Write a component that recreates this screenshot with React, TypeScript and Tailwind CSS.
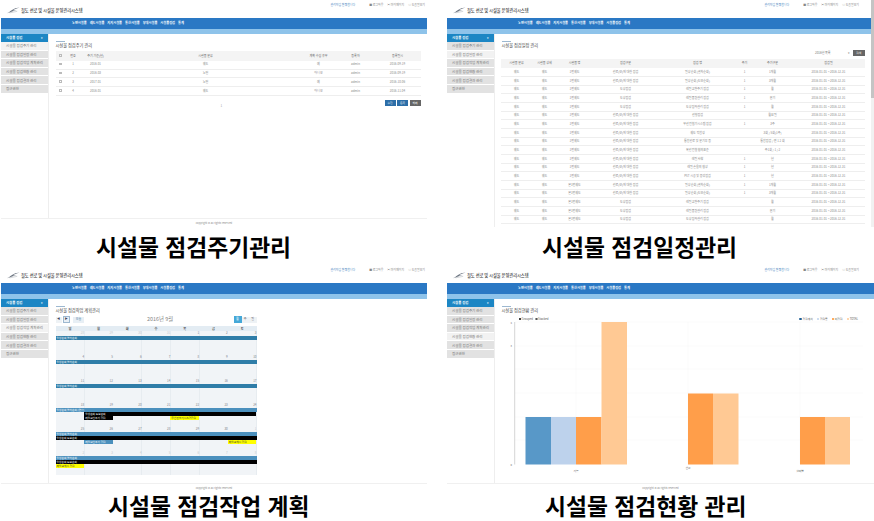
import type { ReactNode } from "react";

const navItems = ["노면시설물", "궤도시설물", "지지시설물", "통신시설물", "부대시설물", "시설물점검", "통계"];
const sideItems = [
  "시설물 점검주기 관리",
  "시설물 점검일정 관리",
  "시설물 점검작업 계획관리",
  "시설물 점검현황 관리",
  "시설물 점검결과 관리",
  "접근권한",
];

function Logo() {
  return (
    <svg viewBox="0 0 14 7" className="w-[13px] h-[7px] shrink-0">
      <path d="M0 6.5 C3 5 5 2.5 9 1 L13.5 .4 C10 1.6 8 2.2 6.5 3.4 L10.5 3 C7 4 4 5.4 0 6.5Z" fill="#6b7480" />
      <path d="M3 6 L11 4.4" stroke="#a3a9b0" strokeWidth=".5" />
    </svg>
  );
}

function Panel(props: {
  active: number;
  title: string;
  caption: string;
  captionClass: string;
  rightPad: string;
  bodyClass: string;
  footer?: boolean;
  children: ReactNode;
}) {
  return (
    <div className="flex flex-col">
      <div className={`flex justify-between h-[18px] pl-[6px] ${props.rightPad}`}>
        <div className="flex items-center gap-[1px] pt-[2px] text-[4.2px] font-medium text-[#333]">
          <Logo />
          <span>철도 선로 및 시설물 운영관리시스템</span>
        </div>
        <div className="flex gap-[4px] pt-[3px] text-[2.9px] leading-[4px] text-[#888]">
          <span className="mr-[10px] text-[#3f7fc0]">관리자님 환영합니다</span>
          <span>■ 로그아웃</span>
          <span>▣ 마이페이지</span>
          <span>◎ 도움말보기</span>
        </div>
      </div>
      <div className="flex items-center gap-[3px] h-[10.5px] pl-[71px] bg-[#2a78c4] text-[3.2px] font-bold text-white">
        {navItems.map((n) => (
          <span key={n}>{n}</span>
        ))}
      </div>
      <div className="h-[5.5px] bg-[#8ec3ea]" />
      <div className={`flex overflow-hidden ${props.bodyClass}`}>
        <div className="w-[46.5px] shrink-0 border-r border-[#eeeeee] box-content">
          <div className="flex items-center justify-between h-[8px] px-[5px] bg-[#1c86c4] text-[3.4px] font-bold text-white">
            <span>시설물 점검</span>
            <span className="text-[3px]">▾</span>
          </div>
          {sideItems.map((s, i) => (
            <div
              key={s}
              className={`flex items-center h-[8.6px] pl-[5px] border-b border-white text-[3.5px] text-[#777] ${
                i === props.active ? "bg-[#f2f2f2] text-[#4a86b8]" : "bg-[#e2e2e2]"
              }`}
            >
              {s}
            </div>
          ))}
        </div>
        <div className="flex-1 min-w-0 pt-[6.5px]">
          <div className="ml-[7px] w-[9px] h-[.5px] bg-[#9db8d0]" />
          <div className="ml-[7px] mt-[.5px] text-[4.2px] leading-[6px] text-[#444]">{props.title}</div>
          {props.children}
        </div>
      </div>
      {props.footer !== false && (
        <div className="border-t border-[#f0f0f0] h-[10px] pt-[3px] text-center text-[2.6px] leading-[3px] text-[#888]">
          copyright © all rights reserved
        </div>
      )}
      <div
        className={`font-['Liberation_Sans','Noto_Sans_CJK_KR',sans-serif] font-bold text-black whitespace-nowrap ${props.captionClass}`}
      >
        {props.caption}
      </div>
    </div>
  );
}

const cycleRows = [
  ["1", "2016-01", "궤도", "예", "admin", "2016-09-19"],
  ["2", "2016-03", "노면", "아니오", "admin", "2016-09-19"],
  ["3", "2017-01", "노면", "예", "admin", "2016-10-06"],
  ["4", "2016-01", "궤도", "아니오", "admin", "2016-11-04"],
];

function CycleTable() {
  return (
    <div className="ml-[7px] mt-[3.5px] w-[365px]">
      <table className="w-full table-fixed border-collapse text-center text-[3px] text-[#888]">
        <colgroup>
          <col className="w-[10px]" />
          <col className="w-[15px]" />
          <col className="w-[30px]" />
          <col className="w-[190px]" />
          <col className="w-[36px]" />
          <col className="w-[38px]" />
          <col className="w-[46px]" />
        </colgroup>
        <thead>
          <tr className="h-[9.5px] bg-[#f4f4f4] text-[#666]">
            <th className="font-normal">
              <span className="inline-block w-[2.5px] h-[2.5px] border-[.5px] border-[#bbbbbb]" />
            </th>
            <th className="font-normal">번호</th>
            <th className="font-normal">주기 기준(년)</th>
            <th className="font-normal">시설물 분류</th>
            <th className="font-normal">계획 수립 유무</th>
            <th className="font-normal">등록자</th>
            <th className="font-normal">등록일시</th>
          </tr>
        </thead>
        <tbody>
          {cycleRows.map((r) => (
            <tr key={r[0]} className="h-[8.67px] border-b border-[#eeeeee]">
              <td>
                <span className="inline-block w-[2.5px] h-[2.5px] border-[.5px] border-[#bbbbbb]" />
              </td>
              {r.map((c, i) => (
                <td key={i}>{c}</td>
              ))}
            </tr>
          ))}
        </tbody>
      </table>
      <div className="relative flex justify-end gap-[1.5px] mt-[4.5px] text-[2.8px] text-white">
        <span className="flex items-center justify-center w-[11px] h-[5.5px] bg-[#2c6ea8]">수정</span>
        <span className="flex items-center justify-center w-[11px] h-[5.5px] bg-[#2c6ea8]">등록</span>
        <span className="flex items-center justify-center w-[11px] h-[5.5px] bg-[#666666]">삭제</span>
        <span className="absolute left-[165px] top-[4px] text-[3px] text-[#999]">1</span>
      </div>
    </div>
  );
}

const D = "2016-01-01 ~ 2016-12-31";
const scheduleRows = [
  ["궤도", "궤도", "1번궤도", "선로(보)에 대한 점검", "일상순회 (열차순회)", "1", "1개월"],
  ["궤도", "궤도", "1번궤도", "선로(보)에 대한 점검", "일상순회 (도보순회)", "1", "3개월"],
  ["궤도", "궤도", "1번궤도", "도상점검", "레일교환주기 점검", "1", "월"],
  ["궤도", "궤도", "1번궤도", "도상점검", "레일품질관리 점검", "1", "분기"],
  ["궤도", "궤도", "1번궤도", "도상점검", "도상침하관리 점검", "1", "월"],
  ["궤도", "궤도", "1번궤도", "선로(보)에 대한 점검", "선형점검", "", "월요일"],
  ["궤도", "궤도", "1번궤도", "선로(보)에 대한 점검", "무선전철기시스템 점검", "1", "3주"],
  ["궤도", "궤도", "1번궤도", "선로(보)에 대한 점검", "궤도 적합성", "", "3회 / 5회(1주)"],
  ["궤도", "궤도", "1번궤도", "선로(보)에 대한 점검", "통합선로 및 분기부 등", "", "통합점검 / 연 1 2 회"],
  ["궤도", "궤도", "1번궤도", "선로(보)에 대한 점검", "복선전철 협의표준", "", "주1회 / 1 / 2"],
  ["궤도", "궤도", "1번궤도", "선로(보)에 대한 점검", "레일 사항", "1", "년"],
  ["궤도", "궤도", "1번궤도", "선로(보)에 대한 점검", "레일 손율의 협상", "1", "년"],
  ["궤도", "궤도", "1번궤도", "선로(보)에 대한 점검", "PST 시공 및 증강점검", "1", "년"],
  ["궤도", "궤도", "본1번궤도", "선로(보)에 대한 점검", "일상순회 (열차순회)", "1", "1개월"],
  ["궤도", "궤도", "본1번궤도", "선로(보)에 대한 점검", "일상순회 (도보순회)", "1", "3개월"],
  ["궤도", "궤도", "본1번궤도", "도상점검", "레일교환주기 점검", "", "월"],
  ["궤도", "궤도", "본1번궤도", "도상점검", "레일품질관리 점검", "", "분기"],
  ["궤도", "궤도", "본1번궤도", "도상점검", "도상침하관리 점검", "", "월"],
];

function ScheduleTable() {
  return (
    <div className="ml-[6px] w-[364px] mt-[2px]">
      <div className="flex justify-end items-center gap-[1px] h-[7px] text-[3px] text-[#777]">
        <span className="w-[37px] flex justify-between pr-[2px]">
          <span>2016년 목록</span>
          <span>▾</span>
        </span>
        <span className="flex items-center justify-center w-[11.5px] h-[6px] bg-[#666666] text-[2.8px] text-white">
          검색
        </span>
      </div>
      <table className="mt-[2.5px] w-full table-fixed border-collapse text-center text-[3px] text-[#888]">
        <colgroup>
          <col className="w-[32px]" />
          <col className="w-[24px]" />
          <col className="w-[36px]" />
          <col className="w-[66px]" />
          <col className="w-[78px]" />
          <col className="w-[16px]" />
          <col className="w-[40px]" />
          <col className="w-[72px]" />
        </colgroup>
        <thead>
          <tr className="h-[9px] bg-[#f4f4f4] text-[#666]">
            {["시설물 분류", "시설물 상세", "시설물 명", "점검구분", "점검 명", "주기", "주기구분", "점검일"].map((h) => (
              <th key={h} className="font-normal">
                {h}
              </th>
            ))}
          </tr>
        </thead>
        <tbody>
          {scheduleRows.map((r, idx) => (
            <tr key={idx} className="h-[8.67px] border-b border-[#eeeeee]">
              {r.map((c, i) => (
                <td key={i} className="whitespace-nowrap overflow-hidden">
                  {c}
                </td>
              ))}
              <td className="whitespace-nowrap">{D}</td>
            </tr>
          ))}
        </tbody>
      </table>
    </div>
  );
}

type CalEvent = { cls: string; color: string; text: string };

const BLUE = "bg-[#2f7da8] text-white";
const LIGHTBLUE = "bg-[#4b90bd] text-white";
const BLACK = "bg-black text-white";
const YELLOW = "bg-[#ffff00] text-[#333]";

const weeks: { days: string[]; faint: number[]; rows: CalEvent[][] }[] = [
  {
    days: ["28", "29", "30", "31", "1", "2", "3"],
    faint: [0, 1, 2, 3],
    rows: [[{ cls: "col-start-1 col-span-7", color: BLUE, text: "일상순회 열차순회" }]],
  },
  {
    days: ["4", "5", "6", "7", "8", "9", "10"],
    faint: [],
    rows: [[{ cls: "col-start-1 col-span-7", color: BLUE, text: "일상순회 열차순회" }]],
  },
  {
    days: ["11", "12", "13", "14", "15", "16", "17"],
    faint: [],
    rows: [[{ cls: "col-start-1 col-span-7", color: BLUE, text: "일상순회 열차순회" }]],
  },
  {
    days: ["18", "19", "20", "21", "22", "23", "24"],
    faint: [],
    rows: [
      [{ cls: "col-start-1 col-span-7", color: LIGHTBLUE, text: "일상순회 열차순회 (연장)" }],
      [{ cls: "col-start-2 col-span-6", color: BLACK, text: "일상순회 도보순회" }],
      [
        { cls: "col-start-2 col-span-1", color: BLACK, text: "레일교환주기 점검" },
        { cls: "col-start-5 col-span-1", color: YELLOW, text: "무선전철기시스템점검" },
      ],
    ],
  },
  {
    days: ["25", "26", "27", "28", "29", "30", "1"],
    faint: [6],
    rows: [
      [{ cls: "col-start-1 col-span-7", color: LIGHTBLUE, text: "일상순회 열차순회" }],
      [{ cls: "col-start-1 col-span-7", color: BLACK, text: "일상순회 도보순회" }],
      [
        { cls: "col-start-2 col-span-1", color: LIGHTBLUE, text: "레일교환주기 점검" },
        { cls: "col-start-7 col-span-1", color: YELLOW, text: "레일교체시 점검" },
      ],
    ],
  },
  {
    days: ["2", "3", "4", "5", "6", "7", "8"],
    faint: [0, 1, 2, 3, 4, 5, 6],
    rows: [
      [{ cls: "col-start-1 col-span-7", color: LIGHTBLUE, text: "일상순회 열차순회" }],
      [{ cls: "col-start-1 col-span-7", color: BLACK, text: "일상순회 도보순회" }],
      [{ cls: "col-start-1 col-span-1", color: YELLOW, text: "레일교체시 점검" }],
    ],
  },
];

function Calendar() {
  return (
    <div className="ml-[7px] w-[201px]">
      <div className="flex items-center h-[8px] mt-[3px] text-[3px] text-[#666]">
        <span className="flex items-center justify-center w-[6px] h-[6px] bg-[#eef2f5] text-[#445]">◀</span>
        <span className="flex items-center justify-center w-[7.5px] h-[7px] ml-[1px] border-[.5px] border-[#9db8d0] bg-[#e8eff5] text-[#445]">
          ▶
        </span>
        <span className="flex items-center justify-center w-[11px] h-[6px] ml-[3px] bg-[#e8eff5] text-[#5a86a8]">오늘</span>
        <span className="ml-[63px] w-[24px] text-center text-[5.4px] whitespace-nowrap text-[#888]">2016년 9월</span>
        <span className="flex items-center justify-center w-[8px] h-[7px] ml-auto bg-[#45a8d8] text-white">월</span>
        <span className="flex items-center justify-center w-[7.5px] h-[6px] bg-[#eef2f5]">주</span>
        <span className="flex items-center justify-center w-[7.5px] h-[6px] bg-[#eef2f5]">일</span>
      </div>
      <div className="grid grid-cols-7 h-[5px] mt-[2.5px] bg-[#e3ecf3] text-center text-[3.2px] leading-[5px] font-bold text-[#444]">
        {["일", "월", "화", "수", "목", "금", "토"].map((d) => (
          <span key={d}>{d}</span>
        ))}
      </div>
      {weeks.map((w, wi) => (
        <div
          key={wi}
          className="h-[24px] bg-[repeating-linear-gradient(90deg,#f1f4f7_0,#f1f4f7_28px,#e7ecf0_28px,#e7ecf0_28.71px)]"
        >
          <div className="grid grid-cols-7 h-[5px] text-right text-[3px] leading-[5px]">
            {w.days.map((d, i) => (
              <span key={i} className={w.faint.includes(i) ? "text-[#c4c9cd]" : "text-[#7b8288]"}>
                {d}
              </span>
            ))}
          </div>
          {w.rows.map((row, ri) => (
            <div key={ri} className="grid grid-cols-7 h-[4px]">
              {row.map((e) => (
                <span key={e.text} className={`${e.cls} ${e.color} pl-[1px] text-[2.7px] leading-[4px] whitespace-nowrap overflow-hidden`}>
                  {e.text}
                </span>
              ))}
            </div>
          ))}
        </div>
      ))}
    </div>
  );
}

function LegendDot(props: { color: string; label: string; hollow?: boolean }) {
  return (
    <span className="flex items-center gap-[.5px]">
      <span
        className={`w-[2.6px] h-[2.6px] rounded-full ${props.color} ${props.hollow ? "border-[.5px] border-[#555]" : ""}`}
      />
      {props.label}
    </span>
  );
}

// x coords below are chart-local, 0 = left edge of the content column (page x 495)
function BarChart() {
  const bars = [
    { x: 30.5, w: 25.5, top: 96, fill: "#5898c8" },
    { x: 56, w: 25, top: 96, fill: "#bdd2ec" },
    { x: 81, w: 25.5, top: 96, fill: "#ff9e4a" },
    { x: 106.5, w: 25.5, top: 1, fill: "#ffc994" },
    { x: 193, w: 25, top: 72.5, fill: "#ff9e4a" },
    { x: 218, w: 25.5, top: 72.5, fill: "#ffc994" },
    { x: 305, w: 25, top: 96, fill: "#ff9e4a" },
    { x: 330, w: 25, top: 96, fill: "#ffc994" },
  ];
  return (
    <svg viewBox="0 0 378 158" className="block w-[378px] h-[158px]">
      {[1, 25, 48, 72, 96, 119].map((y) => (
        <line key={y} x1="20" x2="368" y1={y} y2={y} stroke="#f7f7f7" strokeWidth=".5" />
      ))}
      {[81, 193, 305].map((x) => (
        <line key={x} x1={x} x2={x} y1="1" y2="143" stroke="#f7f7f7" strokeWidth=".5" />
      ))}
      <line x1="19.7" x2="19.7" y1="1" y2="143.5" stroke="#b8b8b8" strokeWidth=".6" />
      <text x="17" y="2.5" fontSize="2.6" fill="#666" textAnchor="end">4</text>
      <text x="17" y="26" fontSize="2.6" fill="#666" textAnchor="end">3</text>
      <text x="17" y="145" fontSize="2.6" fill="#666" textAnchor="end">0</text>
      {bars.map((b, i) => (
        <rect key={i} x={b.x} y={b.top} width={b.w} height={143.5 - b.top} fill={b.fill} />
      ))}
      <text x="81" y="151" fontSize="2.8" fill="#555" textAnchor="middle">기능</text>
      <text x="193" y="148" fontSize="2.8" fill="#555" textAnchor="middle">선로</text>
      <text x="305" y="151" fontSize="2.8" fill="#555" textAnchor="middle">설비별</text>
    </svg>
  );
}

function Chart() {
  return (
    <div>
      <div className="flex justify-between h-[4px] mt-[4.5px] pl-[24px] pr-[16px] text-[2.8px] leading-[4px] text-[#555]">
        <div className="flex gap-[2px]">
          <LegendDot color="bg-black" label="Grouped" />
          <LegendDot color="bg-white" label="Stacked" hollow />
        </div>
        <div className="flex gap-[4px]">
          <LegendDot color="bg-[#1f5f96]" label="점검계획" />
          <LegendDot color="bg-[#bdd2ec]" label="점검중" />
          <LegendDot color="bg-[#ff8f2a]" label="미점검" />
          <LegendDot color="bg-[#ffc994]" label="TOTAL" />
        </div>
      </div>
      <BarChart />
    </div>
  );
}

export default function App() {
  return (
    <div className="grid grid-cols-[437px_437px] grid-rows-[265px_256px] w-[874px] h-[521px] overflow-hidden bg-white font-['Noto_Sans_CJK_KR','Noto_Sans',sans-serif]">
      <div className="pl-[1px] w-[427px]">
        <Panel
          active={0}
          title="시설물 점검주기 관리"
          caption="시설물 점검주기관리"
          captionClass="mt-[6px] ml-[95px] text-[22.8px] leading-[29px]"
          rightPad="pr-[2px]"
          bodyClass="h-[184px]"
        >
          <CycleTable />
        </Panel>
      </div>
      <div className="relative pl-[10px]">
        <Panel
          active={1}
          title="시설물 점검일정 관리"
          caption="시설물 점검일정관리"
          captionClass="mt-[7px] ml-[95px] text-[22.8px] leading-[29px]"
          rightPad="pr-[15px]"
          bodyClass="h-[193px]"
          footer={false}
        >
          <ScheduleTable />
        </Panel>
        <div className="absolute right-0 top-0 w-[3px] h-[227px] bg-[#f1f1f1]">
          <div className="h-[98px] bg-[#c4c4c4]" />
        </div>
      </div>
      <div className="pl-[1px] w-[427px]">
        <Panel
          active={2}
          title="시설물 점검작업 계획관리"
          caption="시설물 점검작업 계획"
          captionClass="mt-[1px] ml-[107px] text-[22.8px] leading-[26px]"
          rightPad="pr-[2px]"
          bodyClass="h-[184px]"
        >
          <Calendar />
        </Panel>
      </div>
      <div className="pl-[10px]">
        <Panel
          active={3}
          title="시설물 점검현황 관리"
          caption="시설물 점검현황 관리"
          captionClass="mt-[1px] ml-[98px] text-[22.8px] leading-[26px]"
          rightPad="pr-[15px]"
          bodyClass="h-[184px]"
        >
          <Chart />
        </Panel>
      </div>
    </div>
  );
}
